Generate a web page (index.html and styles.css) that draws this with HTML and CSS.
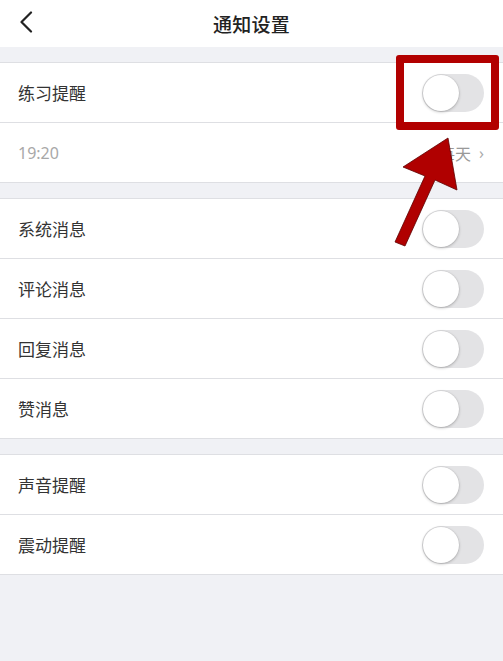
FILE: index.html
```html
<!DOCTYPE html>
<html lang="zh-CN">
<head>
<meta charset="utf-8">
<title>通知设置</title>
<link rel="stylesheet" href="styles.css">
</head>
<body>
<div class="page">
  <header class="nav">
    <svg class="back" width="14" height="22" viewBox="0 0 14 22"><path d="M12 1.5 L2.5 11 L12 20.5" fill="none" stroke="#222" stroke-width="2.2" stroke-linecap="round" stroke-linejoin="round"/></svg>
    <h1 class="title">通知设置</h1>
  </header>

  <section class="group">
    <div class="row"><span class="label">练习提醒</span><span class="toggle"><span class="knob"></span></span></div>
    <div class="row"><span class="time">19:20</span><span class="freq">每天<span class="chev">›</span></span></div>
  </section>

  <section class="group">
    <div class="row"><span class="label">系统消息</span><span class="toggle"><span class="knob"></span></span></div>
    <div class="row"><span class="label">评论消息</span><span class="toggle"><span class="knob"></span></span></div>
    <div class="row"><span class="label">回复消息</span><span class="toggle"><span class="knob"></span></span></div>
    <div class="row"><span class="label">赞消息</span><span class="toggle"><span class="knob"></span></span></div>
  </section>

  <section class="group">
    <div class="row"><span class="label">声音提醒</span><span class="toggle"><span class="knob"></span></span></div>
    <div class="row"><span class="label">震动提醒</span><span class="toggle"><span class="knob"></span></span></div>
  </section>

  <div class="highlight"></div>
  <svg class="arrow" width="503" height="661" viewBox="0 0 503 661">
    <polygon points="448,138 457,190 435,180 405,246 395,242 425,176 403,167" fill="#b00000" stroke="#5e0000" stroke-width="0.8" stroke-linejoin="miter"/>
  </svg>
</div>
</body>
</html>
```

FILE: styles.css
```css
* { box-sizing: border-box; }
html, body {
  margin: 0;
  padding: 0;
  background: #f0f1f5;
}
body {
  font-family: "Noto Sans CJK SC", "Noto Sans", sans-serif;
  color: #333;
}
.page {
  position: relative;
  width: 503px;
  min-height: 661px;
  overflow: hidden;
}
.nav {
  height: 47px;
  background: #fff;
  display: flex;
  align-items: center;
  justify-content: center;
  position: relative;
}
.back {
  position: absolute;
  left: 19px;
  top: 11px;
}
.title {
  margin: 0;
  font-size: 19px;
  font-weight: 500;
  color: #222;
  letter-spacing: 0.3px;
}
.group {
  margin-top: 15px;
  background: #fff;
  border-top: 1px solid #dedfe3;
}
.row {
  height: 60px;
  border-bottom: 1px solid #dedfe3;
  display: flex;
  align-items: center;
  justify-content: space-between;
  padding: 0 19px 0 18px;
}
.label {
  font-size: 17px;
  color: #333;
}
.time {
  font-family: "Noto Sans", sans-serif;
  font-size: 16px;
  color: #a8a8a8;
}
.freq {
  font-size: 16px;
  color: #999;
  display: flex;
  align-items: center;
  gap: 8px;
}
.chev {
  font-family: "Noto Sans", sans-serif;
  font-size: 16px;
  color: #aaa;
}
.toggle {
  width: 62px;
  height: 38px;
  border-radius: 19px;
  background: #e3e3e5;
  position: relative;
  display: block;
}
.knob {
  position: absolute;
  left: 1px;
  top: 1px;
  width: 36px;
  height: 36px;
  border-radius: 50%;
  background: #fff;
  box-shadow: 0 1px 3px rgba(0,0,0,0.25), 0 0 0 0.5px rgba(0,0,0,0.08);
}
.highlight {
  position: absolute;
  left: 396px;
  top: 55px;
  width: 103px;
  height: 75px;
  border: 8px solid #b20000;
  border-radius: 3px;
}
.arrow {
  position: absolute;
  left: 0;
  top: 0;
  pointer-events: none;
}
```
